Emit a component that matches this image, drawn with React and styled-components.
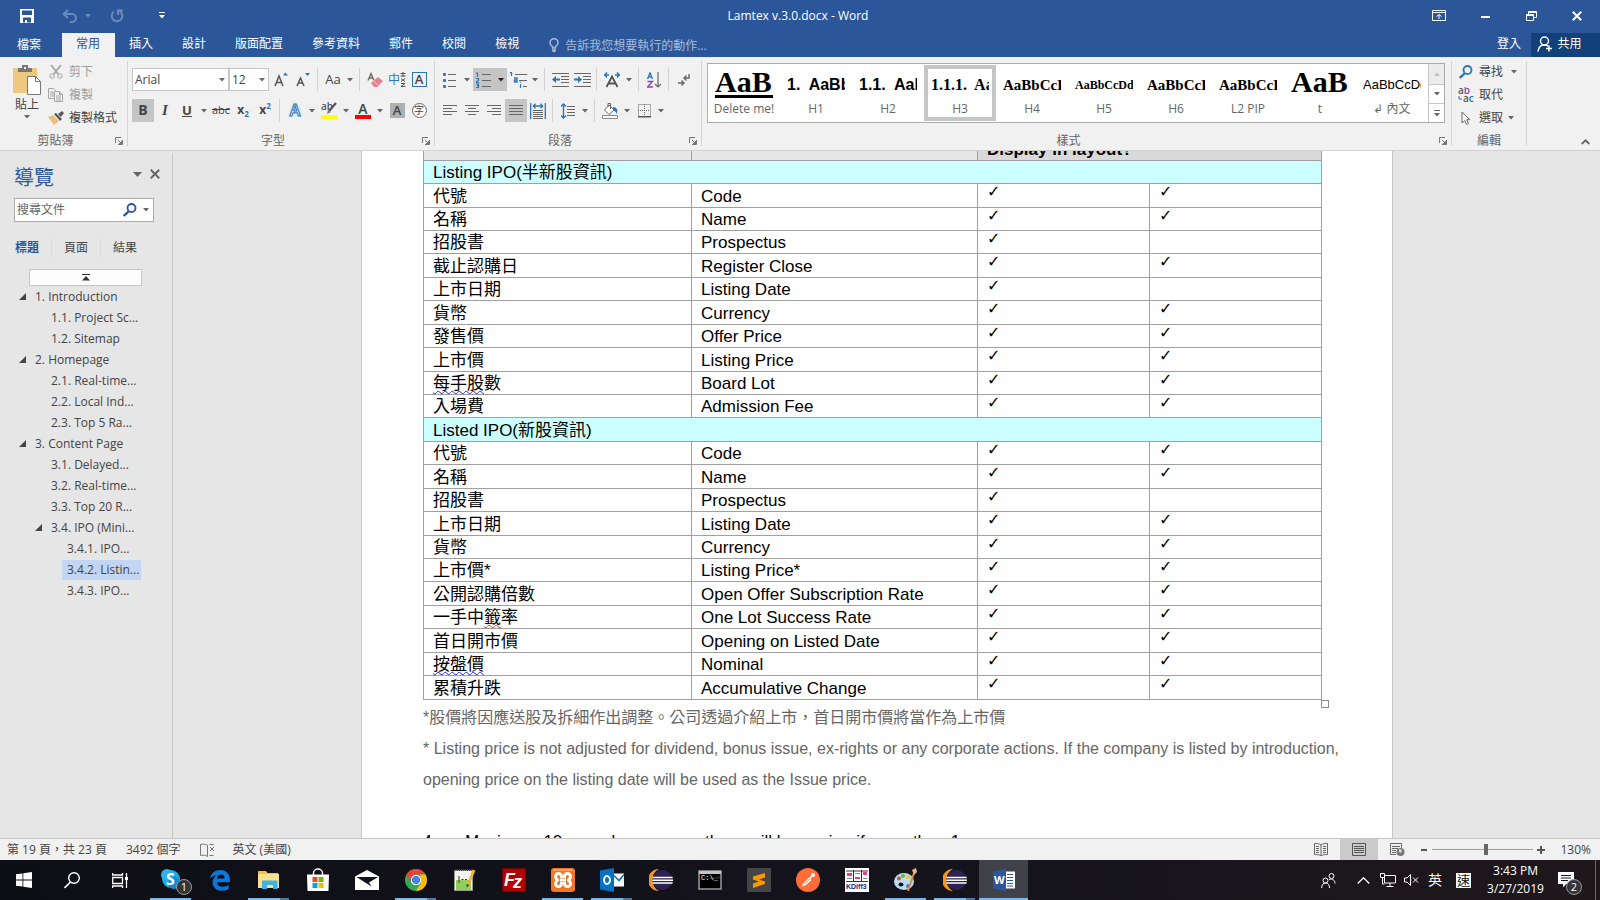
import React from "react";
import styled, { createGlobalStyle, css } from "styled-components";

const UI = `"Open Sans", "Noto Sans CJK TC", sans-serif`;
const DOC = `"Liberation Sans", "Noto Sans CJK TC", sans-serif`;
const SERIF = `"Liberation Serif", serif`;

const blue = "#2b579a";
const iconBlue = "#2e75b6";
const ink = "#444444";
const mute = "#666666";
const line = "#c6c6c6";

const GlobalStyle = createGlobalStyle`
  * { box-sizing: border-box; }
  body { margin: 0; font-family: ${UI}; font-size: 12px; line-height: 16px; color: ${ink}; background: #e6e6e6; overflow: hidden; }
  button, input { font: inherit; color: inherit; margin: 0; padding: 0; border: 0; background: none; border-radius: 0; outline: none; }
  button { display: flex; align-items: center; justify-content: center; white-space: nowrap; cursor: default; }
  a { color: inherit; text-decoration: none; cursor: default; }
  svg { display: block; flex: none; }
  ul { list-style: none; margin: 0; padding: 0; }
`;

const Window = styled.div`
  display: flex;
  flex-direction: column;
  height: 100vh;
`;

/* ---------- title bar ---------- */
const TitleBar = styled.header`
  display: grid;
  grid-template-columns: 1fr auto 1fr;
  align-items: center;
  height: 33px;
  padding-bottom: 2px;
  background: ${blue};
  color: #fff;
`;
const QuickAccess = styled.div`
  display: flex;
  align-items: center;
  gap: 14px;
  padding-left: 18px;
`;
const QuickButton = styled.button`
  height: 24px;
  gap: 8px;
  min-width: 18px;
  opacity: ${(p) => (p.$dim ? 0.3 : 1)};
  margin-right: ${(p) => p.$after || 0}px;
`;
const DocTitle = styled.h1`
  margin: 0;
  padding-right: 4px;
  font-size: 12px;
  font-weight: 400;
  line-height: 16px;
`;
const WindowControls = styled.div`
  display: flex;
  justify-content: flex-end;
`;
const ControlButton = styled.button`
  width: 46px;
  height: 30px;
`;

/* ---------- tabs ---------- */
const TabBar = styled.nav`
  display: flex;
  height: 24px;
  background: ${blue};
  color: #fff;
`;
const Tab = styled.button`
  height: 24px;
  padding: 0 15px 2px 14px;
  color: #fff;
  ${(p) => p.$file && css`padding: 0 21px 0 17px;`}
  ${(p) => p.$signIn && css`padding-right: 10px;`}
  ${(p) => p.$active && css`background: #f1f1f1; color: ${blue};`}
`;
const TellMe = styled.label`
  display: flex;
  align-items: center;
  gap: 6px;
  flex: 1;
  padding-left: 15px;
  color: #a9bcd8;
  input { width: 180px; height: 20px; }
  input::placeholder { color: #a9bcd8; opacity: 1; }
`;
const ShareButton = styled.button`
  width: 69px;
  height: 24px;
  gap: 4px;
  padding: 0 12px 2px 0;
  background: #124078;
  color: #fff;
`;

/* ---------- ribbon ---------- */
const Ribbon = styled.section`
  display: flex;
  height: 94px;
  background: #f1f1f1;
  border-bottom: 1px solid #d2d2d2;
`;
const RibbonDivider = styled.div`
  width: 1px;
  margin: 4px 0;
  background: #d5d5d5;
`;
const Group = styled.div`
  display: grid;
  grid-template-rows: 75px 18px;
  width: ${(p) => p.$width}px;
`;
const GroupFooter = styled.div`
  display: flex;
  align-items: center;
  text-align: center;
  color: ${mute};
  span { flex: 1; }
`;
const Launcher = styled.button`
  width: 16px;
  height: 16px;
`;
const ToolRows = styled.div`
  display: flex;
  flex-direction: column;
  gap: 8px;
  padding: 11px 0 0 4px;
`;
const ToolRow = styled.div`
  display: flex;
  height: 23px;
`;
const ToolSep = styled.div`
  width: 1px;
  margin: 0 4px 0 3px;
  background: #d2d2d2;
`;
const ToolButton = styled.button`
  height: 23px;
  background: ${(p) => (p.$on ? "#c5c5c5" : "transparent")};
`;
const ToolFace = styled.span`
  display: flex;
  align-items: center;
  justify-content: center;
  width: 22px;
`;
const CaretFace = styled.span`
  display: flex;
  align-items: center;
  justify-content: center;
  width: 12px;
`;
const ComboBox = styled.label`
  display: flex;
  align-items: center;
  width: ${(p) => p.$width}px;
  height: 23px;
  margin-right: ${(p) => p.$after || 0}px;
  padding: 0 3px 0 2px;
  background: #fff;
  border: 1px solid ${line};
  input { flex: 1; min-width: 0; width: 0; }
`;
const Glyph = styled.span`
  font-size: ${(p) => p.$size || 14}px;
  line-height: 18px;
  padding-bottom: 2px;
  font-weight: ${(p) => (p.$bold ? 700 : 400)};
  font-style: ${(p) => (p.$italic ? "italic" : "normal")};
  text-decoration: ${(p) => p.$deco || "none"};
  font-family: ${(p) => (p.$serif ? SERIF : UI)};
  sup, sub { font-size: 8px; line-height: 1px; color: ${iconBlue}; }
`;
const BoxedGlyph = styled.span`
  display: flex;
  align-items: center;
  justify-content: center;
  width: 15px;
  height: 15px;
  font-size: ${(p) => (p.$round ? 10 : 13)}px;
  line-height: 15px;
  font-weight: ${(p) => (p.$round ? 400 : 600)};
  border: 1px solid ${(p) => p.$line};
  border-radius: ${(p) => (p.$round ? 8 : 0)}px;
  background: ${(p) => p.$fill || "transparent"};
`;
const GlowGlyph = styled.span`
  font-size: 16px;
  line-height: 18px;
  padding-bottom: 2px;
  font-weight: 600;
  color: #fff;
  -webkit-text-stroke: 1px ${iconBlue};
  text-shadow: 0 0 3px #8db8e0;
`;
const BarGlyph = styled.span`
  display: block;
  width: 16px;
  text-align: center;
  font-size: ${(p) => p.$size}px;
  line-height: 13px;
  font-weight: 600;
  border-bottom: 4px solid ${(p) => p.$bar};
`;

const ClipboardBody = styled.div`
  display: flex;
  padding: 3px 0 0 8px;
`;
const PasteButton = styled.button`
  flex-direction: column;
  justify-content: flex-start;
  width: 38px;
  margin-right: 2px;
  padding-top: 5px;
  gap: 2px;
`;
const SmallColumn = styled.div`
  display: flex;
  flex-direction: column;
`;
const SmallButton = styled.button`
  justify-content: flex-start;
  height: 23px;
  gap: 5px;
  color: ${(p) => (p.$dim ? "#a0a0a0" : ink)};
`;
const IconSlot = styled.span`
  display: flex;
  justify-content: center;
  width: 16px;
`;
const EditingBody = styled.div`
  padding: 3px 0 0 6px;
`;

const StylesBody = styled.div`
  padding: 6px 6px 0 5px;
`;
const Gallery = styled.div`
  display: flex;
  height: 60px;
  background: #fff;
  border: 1px solid #ababab;
`;
const StyleTile = styled.button`
  flex-direction: column;
  justify-content: flex-start;
  width: 72px;
  margin: 1px 0;
  padding: 0 3px;
  border: 4px solid ${(p) => (p.$on ? line : "transparent")};
  color: ${mute};
`;
const StylePreview = styled.span`
  display: flex;
  align-items: center;
  width: 58px;
  height: ${(p) => (p.$big ? 29 : 32)}px;
  margin-bottom: ${(p) => (p.$big ? 3 : 0)}px;
  overflow: hidden;
  white-space: pre;
  color: #000;
  font-family: ${(p) => (p.$sans ? DOC : SERIF)};
  font-weight: ${(p) => (p.$plain ? 400 : 700)};
  font-size: ${(p) => p.$size}px;
  line-height: 26px;
  ${(p) => p.$big && css`border-bottom: 3px solid ${p.$under ? "#000" : "transparent"};`}
`;
const GalleryScroll = styled.div`
  display: grid;
  grid-template-rows: 20px 19px 19px;
  flex: 1;
  border-left: 1px solid ${line};
  button:first-child { background: #ececec; }
  button + button { border-top: 1px solid ${line}; }
`;
const CollapseArea = styled.div`
  flex: 1;
  display: flex;
  justify-content: flex-end;
  align-items: flex-end;
  padding: 0 7px 0 0;
`;

/* ---------- navigation pane ---------- */
const Body = styled.div`
  display: flex;
  flex: 1;
  min-height: 0;
  background: #e6e6e6;
`;
const NavPane = styled.aside`
  width: 173px;
  margin-top: 2px;
  padding: 12px 0 0 14px;
  border-right: 1px solid ${line};
`;
const NavHeader = styled.div`
  display: flex;
  align-items: flex-start;
  height: 26px;
  padding-right: 8px;
  h2 { flex: 1; margin: 0; font-size: 20px; line-height: 26px; font-weight: 400; color: ${blue}; }
  button { width: 18px; height: 18px; }
`;
const SearchBox = styled.label`
  display: flex;
  align-items: center;
  gap: 6px;
  width: 140px;
  height: 24px;
  margin-top: 7px;
  padding: 0 4px 0 2px;
  background: #fff;
  border: 1px solid #ababab;
  input { flex: 1; min-width: 0; width: 0; }
  input::placeholder { color: ${mute}; opacity: 1; }
`;
const NavTabs = styled.div`
  display: flex;
  height: 20px;
  margin-top: 16px;
`;
const NavTab = styled.button`
  width: ${(p) => (p.$first ? 37 : 49)}px;
  padding-right: ${(p) => (p.$first ? 11 : 0)}px;
  color: ${(p) => (p.$first ? blue : ink)};
  font-weight: ${(p) => (p.$first ? 700 : 400)};
  & + & { border-left: 1px solid #dcdcdc; }
`;
const JumpTop = styled.button`
  width: 113px;
  height: 17px;
  margin: 11px 0 0 15px;
  background: #fdfdfd;
  border: 1px solid ${line};
`;
const NavItem = styled.li`
  display: flex;
  align-items: center;
  height: 21px;
  margin-right: 31px;
  padding-left: ${(p) => (p.$level - 1) * 16}px;
  white-space: nowrap;
  a {
    flex: 1;
    height: 20px;
    line-height: 19px;
    padding-left: 5px;
    background: ${(p) => (p.$on ? "#c2d5f2" : "transparent")};
  }
`;
const Twisty = styled.span`
  display: flex;
  width: 16px;
  padding-left: 5px;
`;

/* ---------- document ---------- */
const Workspace = styled.main`
  flex: 1;
  min-width: 0;
  overflow: hidden;
  padding-right: 19px;
`;
const Page = styled.article`
  width: 1032px;
  min-height: 100%;
  margin: -15px auto 0;
  padding: 0 71px 0 61px;
  background: #fff;
  border: solid ${line};
  border-width: 0 1px;
  font-family: ${DOC};
  font-size: 17px;
  line-height: 22px;
  color: #000;
`;
const TableFrame = styled.div`
  position: relative;
`;
const ResizeHandle = styled.span`
  position: absolute;
  left: 100%;
  top: 100%;
  width: 8px;
  height: 8px;
  border: 1px solid #8c8c8c;
  background: #fff;
`;
const DataTable = styled.table`
  width: 100%;
  table-layout: fixed;
  border-collapse: collapse;
  tbody tr { height: 23px; }
  tbody tr:nth-child(7n + 2), tbody tr:nth-child(7n + 5), tbody tr:nth-child(7n + 7) { height: 24px; }
  thead tr { height: 24px; }
`;
const Cell = styled.td`
  padding: 2px 9px 0;
  border: 1px solid #a0a0a0;
  text-align: left;
  font-weight: 400;
  line-height: 20px;
  white-space: nowrap;
`;
const HeadCell = styled(Cell)`
  padding-top: 3px;
  background: ${(p) => (p.$dark ? "#d9d9d9" : "#e6e6e6")};
  font-weight: 700;
`;
const SectionCell = styled(Cell)`
  background: #ccffff;
`;
const CheckCell = styled(Cell)`
  padding-top: 0;
  vertical-align: top;
  font-family: "DejaVu Sans", sans-serif;
  font-size: 16px;
  line-height: 15px;
`;
const Wavy = styled.span`
  text-decoration: underline wavy ${(p) => p.$color} 1px;
  text-underline-offset: 1px;
  text-decoration-skip-ink: none;
`;
const Notes = styled.div`
  padding-top: 2px;
  font-size: 16px;
  line-height: 31px;
  color: #666;
  white-space: nowrap;
  p { margin: 0; }
`;
const NextItem = styled.ol`
  margin: 31px 0 0;
  padding-left: 42px;
  line-height: 31px;
  white-space: nowrap;
  li::marker { content: "4.      "; }
`;

/* ---------- status bar ---------- */
const StatusBar = styled.footer`
  display: flex;
  align-items: center;
  height: 22px;
  border-top: 1px solid ${line};
  background: #f1f1f1;
  padding: 0 9px 0 7px;
  gap: 19px;
`;
const StatusText = styled.span`
  line-height: 20px;
`;
const StatusSpacer = styled.span`
  flex: 1;
`;
const ViewButtons = styled.div`
  display: flex;
`;
const ViewButton = styled.button`
  width: 38px;
  height: 21px;
  background: ${(p) => (p.$on ? "#cacaca" : "transparent")};
`;
const ZoomControls = styled.div`
  display: flex;
  align-items: center;
  gap: 4px;
  margin-left: -15px;
`;
const ZoomSlider = styled.input`
  appearance: none;
  width: 101px;
  height: 12px;
  background: linear-gradient(#a0a0a0, #a0a0a0) center / 100% 1px no-repeat;
  &::-webkit-slider-thumb { appearance: none; width: 4px; height: 11px; background: #666; border: 0; }
`;
const ZoomValue = styled.span`
  width: 32px;
  margin-left: -5px;
  text-align: right;
`;

/* ---------- taskbar ---------- */
const Taskbar = styled.div`
  display: flex;
  height: 40px;
  background: linear-gradient(90deg, #0e0e16, #15141d 60%, #1f181b);
  color: #fff;
`;
const TaskSystem = styled.div`
  display: flex;
  width: 146px;
`;
const SystemButton = styled.button`
  width: 48px;
`;
const TaskApp = styled.button`
  position: relative;
  width: 49px;
  background: ${(p) => (p.$active ? "#414149" : "transparent")};
  &::after {
    content: "";
    position: absolute;
    bottom: 0;
    left: ${(p) => (p.$active ? 0 : 4)}px;
    right: ${(p) => (p.$active ? 0 : 4)}px;
    height: 2px;
    background: ${(p) =>
      p.$run === 2
        ? "linear-gradient(90deg, #76b9ed 32px, #4d7ba0 32px)"
        : p.$run === 1
        ? "#76b9ed"
        : "transparent"};
  }
`;
const Badge = styled.span`
  position: absolute;
  left: ${(p) => p.$left}px;
  bottom: 5px;
  width: 16px;
  height: 16px;
  border-radius: 8px;
  border: 1px solid #9a9a9a;
  background: #33343a;
  font-size: 11px;
  line-height: 14px;
  text-align: center;
`;
const Tray = styled.div`
  display: flex;
  align-items: center;
  margin-left: auto;
`;
const TrayButton = styled.button`
  position: relative;
  width: ${(p) => p.$width}px;
  height: 40px;
  padding-right: ${(p) => p.$end || 0}px;
  font-size: 14px;
`;
const ImeBox = styled.span`
  width: 15px;
  height: 15px;
  background: #fff;
  color: #111;
  font-size: 13px;
  line-height: 15px;
`;
const Clock = styled.button`
  flex-direction: column;
  width: 71px;
  height: 40px;
  line-height: 18px;
`;
const ShowDesktop = styled.button`
  width: 5px;
  height: 40px;
  border-left: 1px solid #6b6769;
`;

/* ---------- drawings ---------- */
const Svg = ({ w = 16, h = 16, children, ...rest }) => (
  <svg width={w} height={h} viewBox={`0 0 ${w} ${h}`} fill="none" aria-hidden="true" {...rest}>
    {children}
  </svg>
);
const Caret = ({ color = "#666" }) => (
  <Svg w={6} h={4}><path d="M0 0h6L3 3.5z" fill={color} /></Svg>
);
const P = ({ d, c = "#666", s = 1, f = "none" }) => <path d={d} stroke={c} strokeWidth={s} fill={f} />;

const SaveIcon = () => (
  <Svg w={14} h={14}><path fillRule="evenodd" fill="#fff" d="M0 0h14v14H0zM2 1.500h10V6H2zM3 8.500v5h2v-2.500h2v2.500h4v-5z" /></Svg>
);
const UndoIcon = () => (
  <Svg w={15} h={14}><P c="#fff" s={2} d="M6 1L1.500 5 6 9M2 5h8a3.500 3.500 0 0 1 0 8H8" /></Svg>
);
const RedoIcon = () => (
  <Svg w={14} h={14}><P c="#fff" s={2} d="M4 2.500A5.300 5.300 0 1 0 9.500 2.200M8 6V1.500h5" /></Svg>
);
const CustomizeIcon = () => (
  <Svg w={6} h={7}><path fill="#fff" d="M0 0h6v1H0zM0 3h6L3 6.500z" /></Svg>
);
const BulbIcon = () => (
  <Svg w={10} h={14}><P c="#a9bcd8" s={1.5} d="M3.500 10V8.500C2 7.500 1 6.500 1 4.700a4 4 0 0 1 8 0C9 6.500 8 7.500 6.500 8.500V10zM3 12h4M3.500 13.500h3" /></Svg>
);
const ShareIcon = () => (
  <Svg w={16} h={16}><P c="#fff" s={1.5} d="M1 15.500C1.500 11.500 4 9 7 9s3.500 .5 4.500 1.500" /><circle cx="7.500" cy="5" r="4" stroke="#fff" strokeWidth="1.500" /><P c="#fff" s={1.5} d="M12 9.500v6M9 12.500h6" /></Svg>
);
const LauncherIcon = () => (
  <Svg w={8} h={8}><P c="#777" d="M.5 6V.5H6M3 3l3 3M7.500 3v4.500H3" /><path fill="#777" d="M7 3.500V7H3.500z" /></Svg>
);
const PasteIcon = () => (
  <Svg w={28} h={30}>
    <path fill="#edc87e" d="M0 3h24v25H0z" />
    <path fill="#777" d="M5 3h4V0h6v3h4v4H5z" /><path fill="#f1f1f1" d="M11 2h2v2h-2z" />
    <path fill="#fff" stroke="#777" d="M14.500 11.500h8l5 5v13h-13z" /><P c="#777" d="M22.500 11.500v5h5" />
  </Svg>
);
const CutIcon = () => (
  <Svg w={14} h={14}><P c="#a6a6a6" s={1.8} d="M2 0l7.500 9.500M12 0L4.500 9.500" /><circle cx="3" cy="11" r="2.200" stroke="#a6a6a6" /><circle cx="11" cy="11" r="2.200" stroke="#a6a6a6" /></Svg>
);
const CopyIcon = () => (
  <Svg w={16} h={14}><P c="#a6a6a6" f="#f1f1f1" d="M.5 .5h5l2 2v8h-7z" /><P c="#a6a6a6" d="M2 4h4M2 6h4M2 8h4" /><P c="#a6a6a6" f="#f1f1f1" d="M6.500 3.500h5l3 3v7h-8zM11.500 3.500v3h3M8 8h5M8 10h5M8 12h5" /></Svg>
);
const BrushIcon = () => (
  <Svg w={16} h={14}><path fill="#edc07a" d="M0 6l5-2 6 6-5 4z" /><path fill="#595959" d="M6 3l2-1 6 6-2 2zM10 3l4-3 2 2-3 4z" /></Svg>
);
const EraserIcon = () => (
  <Svg w={16} h={16}><P c="#666" s={1.3} d="M1 8.500L4 1.500 7 8.500M2 6h4" /><path fill="#e8818f" d="M4 11l7-6 5 4-6 6H7z" /><P c="#f7d5d9" d="M6.500 9l4.500 4" /></Svg>
);
const lines = (x, w, ys, c = "#666") => ys.map((y) => <path key={`${x}-${y}`} fill={c} d={`M${x} ${y}h${w}v1h-${w}z`} />);
const BulletsIcon = () => (
  <Svg w={14} h={16}>{[1, 7, 13].map((y) => <rect key={y} x="0" y={y} width="3" height="3" rx="1" fill={iconBlue} />)}{lines(5, 8, [2, 8, 14])}</Svg>
);
const NumbersIcon = () => (
  <Svg w={16} h={16}><P c={iconBlue} s={1.2} d="M0 1h1.500v4M0 6.500h2.500v1.500L0 10.500h3M0 12h2.500v3.500H0M1 13.700h1.500" />{lines(6, 9, [2, 8, 14])}</Svg>
);
const MultiIcon = () => (
  <Svg w={17} h={16}><P c={iconBlue} s={1.3} d="M0 .7h1.500V4M4 6h3v4H4.500V8H7M10.500 12v4M10.500 10.500v-1" />{lines(5, 12, [2])}{lines(9, 8, [8])}{lines(13, 4, [14])}</Svg>
);
const IndentIcon = ({ flip }) => (
  <Svg w={17} h={14}>{lines(0, 17, [0, 13])}{lines(9, 8, [3, 6, 9])}<path fill={iconBlue} transform={flip ? "matrix(-1 0 0 1 8 0)" : undefined} d="M0 6.500L4 3v2.500h4v2H4V10z" /></Svg>
);
const AsianIcon = () => (
  <Svg w={16} h={16}><P c="#555" s={1.8} d="M2.500 15L8 4.500l5.500 10.500M4.500 11.500h7" /><P c={iconBlue} s={1.4} d="M0 3h5M11 3h5M3 .5L.8 3 3 5.500M13 .5L15.200 3 13 5.500" /></Svg>
);
const SortIcon = () => (
  <Svg w={14} h={16}><P c={iconBlue} s={1.3} d="M.5 7L3 .7 5.500 7M1.500 5h3" /><P c="#8e44ad" s={1.3} d="M.5 9.500h5l-5 5.500h5.500" /><P c="#666" s={1.2} d="M11 0v15M8 12l3 3 3-3" /></Svg>
);
const MarksIcon = () => (
  <Svg w={12} h={14}><P c="#666" s={1.4} d="M11 1v4H6M8.500 2.500L6 5l2.500 2.500M0 10h6M3.500 7.500L6 10l-2.500 2.500" /></Svg>
);
const AlignIcon = ({ kind }) => (
  <Svg w={14} h={11}>
    {kind === "j" && lines(0, 14, [0, 3, 6, 9])}
    {kind === "l" && <>{lines(0, 14, [0, 6])}{lines(0, 9, [3, 9])}</>}
    {kind === "c" && <>{lines(0, 14, [0, 6])}{lines(3, 8, [3, 9])}</>}
    {kind === "r" && <>{lines(0, 14, [0, 6])}{lines(5, 9, [3, 9])}</>}
  </Svg>
);
const DistributeIcon = () => (
  <Svg w={16} h={16}><P c={iconBlue} s={1.3} d="M.7 0v16M15.300 0v16M3 3h10M5.500 .8L3.300 3l2.200 2.200M10.500 .8L12.700 3l-2.200 2.200" />{lines(3, 10, [7, 9, 11, 13, 15])}</Svg>
);
const SpacingIcon = () => (
  <Svg w={14} h={16}><P c={iconBlue} s={1.4} d="M2.500 1v14M0 3.500L2.500 1 5 3.500M0 12.500L2.500 15 5 12.500" />{lines(6, 8, [3, 6, 9, 12])}</Svg>
);
const BucketIcon = () => (
  <Svg w={16} h={16}><P c="#666" f="#fff" d="M2.500 7L7 2l5 5-5 4.500zM6 4V.5h2.500V6" /><path fill={iconBlue} d="M11 4c4 0 5 3 4 7-1-2-2-3-4-4z" /><P c="#888" f="#fff" d="M.5 12.500h15v3H.5z" /></Svg>
);
const BorderIcon = () => (
  <Svg w={13} h={14}><path d="M.5 .5h12v12H.5zM6.500 0v12M0 6.500h12" stroke="#666" strokeDasharray="1 1" /><path fill="#555" d="M0 12h13v1.500H0z" /></Svg>
);
const FindIcon = ({ c = iconBlue }) => (
  <Svg w={14} h={14}><circle cx="8.500" cy="5" r="4" stroke={c} strokeWidth="1.800" /><P c={c} s={2.4} d="M5.500 8.500L.8 13" /></Svg>
);
const ReplaceIcon = () => (
  <Svg w={16} h={16}>
    <text x="0" y="7" fontSize="10" fontWeight="600" fontFamily="Open Sans" fill="#555">a<tspan fill="#8e44ad">b</tspan></text>
    <text x="5" y="15" fontSize="10" fontWeight="600" fontFamily="Open Sans" fill="#555">a<tspan fill={iconBlue}>c</tspan></text>
    <P c={iconBlue} d="M1 9v3h3" />
  </Svg>
);
const SelectIcon = () => (
  <Svg w={10} h={14}><P c="#666" f="#fff" d="M1 1v11l2.700-2.500L5.500 13.500l2-1L5.700 8.700H9z" /></Svg>
);
const HighlightIcon = () => (
  <Svg w={17} h={17}><text x="0" y="8" fontSize="10" fontWeight="600" fontFamily="Open Sans" fill="#555">ab</text><P c="#555" s={2.2} d="M15 1L8 9" /><path fill="#777" d="M7 8l3 2-4 2z" /><path fill="#ff0" d="M0 13h16v4H0z" /></Svg>
);
const PhoneticIcon = () => (
  <Svg w={17} h={16}><text x="-1" y="12" fontSize="12" fontFamily="Noto Sans CJK TC" fill={iconBlue}>中</text><P c="#555" d="M11.500 1.500h5M11.500 4h5M14 0v5M12 6.500l4 3M16 6.500l-4 3M12 11.500h4l-4 3h4.500" /></Svg>
);

/* taskbar drawings */
const WindowsLogo = () => <Svg w={16} h={16}><path fill="#fff" d="M0 2.300l6.500-.9v6.100H0zM7.300 1.300L16 0v7.500H7.300zM0 8.400h6.500v6.200L0 13.700zM7.300 8.400H16V16l-8.700-1.200z" /></Svg>;
const TaskSearch = () => <Svg w={16} h={17}><circle cx="10" cy="6" r="5.300" stroke="#fff" strokeWidth="1.400" /><P c="#fff" s={1.6} d="M6.500 10L.5 16" /></Svg>;
const TaskView = () => <Svg w={17} h={15}><P c="#fff" s={1.3} d="M.5 0v2h10V0M.5 15v-2h10v2M.7 4.500h9.800v6H.7zM14.500 0v15" /><path fill="#fff" d="M13 4h3v3h-3z" /></Svg>;
const Skype = () => <Svg w={24} h={24}><circle cx="12" cy="11" r="9" fill="#1da8e8" /><circle cx="8" cy="7" r="6" fill="#28b2ee" /><circle cx="15" cy="15" r="6" fill="#0d8ed4" /><text x="7" y="17" fontSize="16" fontWeight="700" fontFamily="Open Sans" fill="#fff">S</text></Svg>;
const Edge = () => <Svg w={22} h={22}><path fill="#0b78d8" d="M1 10C2 4 6 1 11.500 1 17.500 1 21 5.500 21 11v2.200H8c.2 3 2.500 4.600 5.600 4.600 2.400 0 4.500-.7 6-1.700v4c-1.700 1-4 1.700-6.800 1.700C7 21.800 3.600 18 3.600 13.500c0-3.200 1.700-5.800 4.300-7.200C4.600 6.700 2.200 8 1 10zM8.200 9.500h7.300c0-2.400-1.200-3.900-3.500-3.900-2.200 0-3.500 1.600-3.800 3.900z" /></Svg>;
const Explorer = () => <Svg w={24} h={20}><path fill="#f0c04e" d="M1 1h8l1.500 2H21v3H1z" /><path fill="#fbe08c" d="M1 4h21v14H1z" /><path fill="#3cb2e8" d="M5 10.500h15.500V19H16v-4h-6v4H5z" /></Svg>;
const Store = () => <Svg w={24} h={24}><P c="#fff" s={1.4} d="M7.500 7V5a4.500 4 0 0 1 9 0v2" /><path fill="#fff" d="M1 6.500h22L22.500 23h-21z" /><path fill="#e84a1f" d="M6.500 9h5v5h-5z" /><path fill="#7ab800" d="M12.500 9h5v5h-5z" /><path fill="#00a4ef" d="M6.500 15h5v5h-5z" /><path fill="#fdb900" d="M12.500 15h5v5h-5z" /></Svg>;
const Mail = () => <Svg w={24} h={20}><path fill="#fff" d="M12 0l12 6.500V20H0V6.500z" /><path fill="#12121a" d="M1.500 7h21.500l-9 5.500 2.500 4z" /></Svg>;
const Chrome = () => <Svg w={24} h={24}><circle cx="12" cy="12" r="11" fill="#34a853" /><path fill="#ea4335" d="M2.500 6.500A11 11 0 0 1 21.500 6.500H12L7.500 14.500z" /><path fill="#fbbc05" d="M21.500 6.500A11 11 0 0 1 12 23l5-8.500L16 6.500z" /><circle cx="12" cy="12" r="5.200" fill="#fff" /><circle cx="12" cy="12" r="4.200" fill="#4285f4" /></Svg>;
const Notepad = () => <Svg w={24} h={24}><path fill="#f5f5ee" stroke="#999" d="M1.500 2.500h18v20h-18z" /><path fill="#8fd05a" d="M3 12h15v10H3z" /><path d="M2 2h17" stroke="#444" strokeWidth="2" strokeDasharray="1 1" /><P c="#333" d="M6 8v7M8.500 11.500h2M12 11.500h2" /><P c="#e8b23c" s={3} d="M21 2l-6 15" /><path fill="#333" d="M13.500 16l2.600 1-2.300 2.500z" /></Svg>;
const FileZilla = () => <Svg w={24} h={24}><path fill="#b30000" stroke="#6e0000" strokeDasharray="2 1" d="M.5 .5h23v23H.5z" /><text x="2" y="18" fontSize="18" fontWeight="700" fontStyle="italic" fontFamily="Liberation Sans" fill="#fff">F<tspan x="11" y="20">z</tspan></text></Svg>;
const Xampp = () => (
  <Svg w={24} h={24}>
    <rect width="24" height="24" rx="3" fill="#f37623" /><path fill="#f9a065" d="M2 1h20v2H2z" />
    <P c="#fff" s={3} d="M10.500 10V8.500a3 3 0 0 0-6 0c0 1.800 1 2.500 2 3.500-1 1-2 1.700-2 3.500a3 3 0 0 0 6 0V14M13.500 10V8.500a3 3 0 0 1 6 0c0 1.800-1 2.500-2 3.500 1 1 2 1.700 2 3.500a3 3 0 0 1-6 0V14M9 12h6" />
  </Svg>
);
const Outlook = () => <Svg w={24} h={24}><path fill="#fff" d="M13 5.500h11v13H13z" /><P c="#0072c6" s={1.6} d="M14 7.500l5 5 5-6" /><path fill="#0072c6" d="M0 2.500L14 0v24L0 21.500z" /><ellipse cx="7" cy="12" rx="3" ry="3.900" stroke="#fff" strokeWidth="2" /></Svg>;
const Eclipse = () => <Svg w={24} h={24}><path fill="#f7941e" d="M10 1a11 11 0 0 0 0 22A12.500 12.500 0 0 1 10 1z" /><circle cx="13.500" cy="12" r="10" fill="#2c2255" /><path fill="#fff" d="M3.500 8.800h20l.3 1.500H3.300zM3.300 11.500h21v1.600H3.200zM3.400 14.300h20.400l-.4 1.500H3.700z" /></Svg>;
const Cmd = () => <Svg w={24} h={20}><path fill="#000" stroke="#9b9b9b" strokeWidth="1.500" d="M1 1h22v18H1z" /><path fill="#c5c5c5" d="M1 1h22v3H1z" /><path fill="#333" opacity=".7" d="M2 10c8-3 14-2 20-4v3H2z" /><text x="3" y="10" fontSize="7" fontFamily="Liberation Mono" fill="#fff">C:\_</text></Svg>;
const Sublime = () => <Svg w={24} h={24}><rect width="24" height="24" rx="1" fill="#454545" /><path fill="#ff9800" d="M6 8.500L18 5v4.500l-6 2 6 2V16L6 20v-4.500l6-2-6-2z" /></Svg>;
const Postman = () => <Svg w={24} h={24}><circle cx="12" cy="12" r="12" fill="#ff6c37" /><path fill="#fff" d="M5.500 18.500l1.500-3 6-6 2.500 2.500-6 5.500z" /><circle cx="17" cy="7" r="2" fill="#fff" /><P c="#fff" s={1.4} d="M13 11l4-4" /><P c="#ff6c37" d="M8 16.500l5.500-5.500" /></Svg>;
const KDiff = () => <Svg w={24} h={24}><path fill="#fff" d="M0 0h24v24H0z" /><path stroke="#333" d="M1 3h7M9 3h7M17 3h6M8.500 2v11M16.500 2v11M1 13.500h22" /><path fill="#e83e8c" d="M2 5h5v3H2zM10 9h5v2h-5zM18 4h4v3h-4z" /><path fill="#888" d="M2 10h5v1H2zM10 5h5v1h-5zM18 10h4v1h-4z" /><text x="1" y="21" fontSize="7" fontWeight="700" fontFamily="Liberation Sans" fill="#1c1c7a">KDiff3</text></Svg>;
const Paint = () => <Svg w={24} h={24}><ellipse cx="10" cy="13.500" rx="10" ry="8.500" fill="#bcdcf2" /><ellipse cx="7" cy="16.500" rx="2.500" ry="2" fill="#15141d" /><circle cx="5" cy="10.500" r="2" fill="#d94b3b" /><circle cx="9" cy="8" r="2" fill="#6cb33f" /><circle cx="14" cy="9" r="2" fill="#f4c430" /><circle cx="14" cy="18" r="2" fill="#4678c8" /><P c="#d98b3c" s={2} d="M20 5l-6 18" /><path fill="#e5b985" d="M18 2l4-2 1 4-3 3z" /></Svg>;
const WordLogo = () => <Svg w={22} h={22}><path fill="#fff" d="M12 2.500h10v17H12z" /><path stroke="#2b579a" d="M14 5.500h6M14 8.500h6M14 11.500h6M14 14.500h6M14 17h6" /><path fill="#2b579a" d="M0 2.300L13 0v22L0 19.700z" /><text x="1" y="15" fontSize="11" fontWeight="700" fontFamily="Open Sans" fill="#fff">W</text></Svg>;

/* ---------- data ---------- */
const TABS = ["常用", "插入", "設計", "版面配置", "參考資料", "郵件", "校閱", "檢視"];
const STYLES = [
  { name: "Delete me!", text: "AaB", size: 30, under: true, big: true },
  { name: "H1", text: "1.  AaBb", size: 16, sans: true },
  { name: "H2", text: "1.1.  AaB", size: 16, sans: true },
  { name: "H3", text: "1.1.1.  Aa", size: 16, on: true },
  { name: "H4", text: "AaBbCcD", size: 15 },
  { name: "H5", text: "AaBbCcDd", size: 12 },
  { name: "H6", text: "AaBbCcD", size: 15 },
  { name: "L2 PIP", text: "AaBbCcD", size: 15 },
  { name: "t", text: "AaB", size: 30, big: true },
  { name: "↲ 內文", text: "AaBbCcDd", size: 13, sans: true, plain: true },
];
const OUTLINE = [
  [1, "1. Introduction", true], [2, "1.1. Project Sc..."], [2, "1.2. Sitemap"],
  [1, "2. Homepage", true], [2, "2.1. Real-time..."], [2, "2.2. Local Ind..."], [2, "2.3. Top 5 Ra..."],
  [1, "3. Content Page", true], [2, "3.1. Delayed..."], [2, "3.2. Real-time..."], [2, "3.3. Top 20 R..."],
  [2, "3.4. IPO (Mini...", true], [3, "3.4.1. IPO..."], [3, "3.4.2. Listin...", false, true], [3, "3.4.3. IPO..."],
];
const ROWS = [
  { section: "Listing IPO(半新股資訊)" },
  { zh: "代號", en: "Code", a: 1, b: 1 },
  { zh: "名稱", en: "Name", a: 1, b: 1 },
  { zh: "招股書", en: "Prospectus", a: 1 },
  { zh: "截止認購日", en: "Register Close", a: 1, b: 1 },
  { zh: "上市日期", en: "Listing Date", a: 1 },
  { zh: "貨幣", en: "Currency", a: 1, b: 1 },
  { zh: "發售價", en: "Offer Price", a: 1, b: 1 },
  { zh: "上市價", en: "Listing Price", a: 1, b: 1 },
  { zh: <><Wavy $color="#22f">每手股</Wavy>數</>, en: "Board Lot", a: 1, b: 1 },
  { zh: "入場費", en: "Admission Fee", a: 1, b: 1 },
  { section: "Listed IPO(新股資訊)" },
  { zh: "代號", en: "Code", a: 1, b: 1 },
  { zh: "名稱", en: "Name", a: 1, b: 1 },
  { zh: "招股書", en: "Prospectus", a: 1 },
  { zh: "上市日期", en: "Listing Date", a: 1, b: 1 },
  { zh: "貨幣", en: "Currency", a: 1, b: 1 },
  { zh: "上市價*", en: "Listing Price*", a: 1, b: 1 },
  { zh: "公開認購倍數", en: "Open Offer Subscription Rate", a: 1, b: 1 },
  { zh: <>一手中<Wavy $color="#f22">籤</Wavy>率</>, en: "One Lot Success Rate", a: 1, b: 1 },
  { zh: "首日開市價", en: "Opening on Listed Date", a: 1, b: 1 },
  { zh: <Wavy $color="#22f">按盤價</Wavy>, en: "Nominal", a: 1, b: 1 },
  { zh: "累積升跌", en: "Accumulative Change", a: 1, b: 1 },
];
const APPS = [
  ["Skype", Skype, 1, "1"], ["Edge", Edge], ["File Explorer", Explorer, 2], ["Store", Store], ["Mail", Mail],
  ["Chrome", Chrome, 2], ["Notepad++", Notepad], ["FileZilla", FileZilla], ["XAMPP", Xampp, 1], ["Outlook", Outlook, 2],
  ["Eclipse", Eclipse], ["Command Prompt", Cmd], ["Sublime Text", Sublime], ["Postman", Postman], ["KDiff3", KDiff],
  ["Paint", Paint, 1], ["Eclipse workspace", Eclipse, 2], ["Word", WordLogo, 1],
];

const Tool = ({ label, caret, on, children }) => (
  <ToolButton $on={on} aria-label={label}>
    <ToolFace>{children}</ToolFace>
    {caret && <CaretFace><Caret color={on ? "#222" : "#666"} /></CaretFace>}
  </ToolButton>
);
const RibbonGroup = ({ label, width, launcher = true, children }) => (
  <>
    <Group $width={width}>
      {children}
      <GroupFooter>
        <span>{label}</span>
        {launcher && <Launcher aria-label={`${label} 設定`}><LauncherIcon /></Launcher>}
      </GroupFooter>
    </Group>
    <RibbonDivider />
  </>
);

function RibbonBar() {
  return (
    <Ribbon>
      <RibbonGroup label="剪貼簿" width={127}>
        <ClipboardBody>
          <PasteButton><PasteIcon /><span>貼上</span><Caret /></PasteButton>
          <SmallColumn>
            <SmallButton $dim><IconSlot><CutIcon /></IconSlot>剪下</SmallButton>
            <SmallButton $dim><IconSlot><CopyIcon /></IconSlot>複製</SmallButton>
            <SmallButton><IconSlot><BrushIcon /></IconSlot>複製格式</SmallButton>
          </SmallColumn>
        </ClipboardBody>
      </RibbonGroup>

      <RibbonGroup label="字型" width={306}>
        <ToolRows>
          <ToolRow>
            <ComboBox $width={97}><input aria-label="字型" defaultValue="Arial" /><Caret /></ComboBox>
            <ComboBox $width={40} $after={1}><input aria-label="字型大小" defaultValue="12" /><Caret /></ComboBox>
            <Tool label="放大字型"><Svg w={14} h={16}><P c="#555" s={1.5} d="M1 14L5 4l4 10M2.500 10.500h5" /><path fill={iconBlue} d="M9 3.500h5L11.500 .5z" /></Svg></Tool>
            <Tool label="縮小字型"><Svg w={14} h={16}><P c="#555" s={1.5} d="M1 14L4.500 6 8 14M2.500 11h4" /><path fill={iconBlue} d="M9 1h5l-2.500 3z" /></Svg></Tool>
            <ToolSep />
            <Tool label="大小寫轉換" caret><Glyph $size={13}>Aa</Glyph></Tool>
            <ToolSep />
            <Tool label="清除格式"><EraserIcon /></Tool>
            <Tool label="注音標示"><PhoneticIcon /></Tool>
            <Tool label="字元框線"><BoxedGlyph $line={iconBlue}>A</BoxedGlyph></Tool>
          </ToolRow>
          <ToolRow>
            <Tool label="粗體" on><Glyph $bold>B</Glyph></Tool>
            <Tool label="斜體"><Glyph $italic $serif $bold $size={15}>I</Glyph></Tool>
            <Tool label="底線" caret><Glyph $bold $size={13} $deco="underline">U</Glyph></Tool>
            <Tool label="刪除線"><Glyph $size={11} $deco="line-through">abc</Glyph></Tool>
            <Tool label="下標"><Glyph $bold $size={12}>x<sub>2</sub></Glyph></Tool>
            <Tool label="上標"><Glyph $bold $size={12}>x<sup>2</sup></Glyph></Tool>
            <ToolSep />
            <Tool label="文字效果" caret><GlowGlyph>A</GlowGlyph></Tool>
            <Tool label="文字醒目提示" caret><HighlightIcon /></Tool>
            <Tool label="字型色彩" caret><BarGlyph $size={14} $bar="#f00">A</BarGlyph></Tool>
            <Tool label="字元網底"><BoxedGlyph $line="#b0b0b0" $fill="#b0b0b0">A</BoxedGlyph></Tool>
            <Tool label="圍繞字元"><BoxedGlyph $round $line="#666" $fill="#fff">字</BoxedGlyph></Tool>
          </ToolRow>
        </ToolRows>
      </RibbonGroup>

      <RibbonGroup label="段落" width={266}>
        <ToolRows>
          <ToolRow>
            <Tool label="項目符號" caret><BulletsIcon /></Tool>
            <Tool label="編號" caret on><NumbersIcon /></Tool>
            <Tool label="多層次清單" caret><MultiIcon /></Tool>
            <ToolSep />
            <Tool label="減少縮排"><IndentIcon /></Tool>
            <Tool label="增加縮排"><IndentIcon flip /></Tool>
            <ToolSep />
            <Tool label="亞洲方式配置" caret><AsianIcon /></Tool>
            <ToolSep />
            <Tool label="排序"><SortIcon /></Tool>
            <ToolSep />
            <Tool label="顯示編輯標記"><MarksIcon /></Tool>
          </ToolRow>
          <ToolRow>
            <Tool label="靠左對齊"><AlignIcon kind="l" /></Tool>
            <Tool label="置中"><AlignIcon kind="c" /></Tool>
            <Tool label="靠右對齊"><AlignIcon kind="r" /></Tool>
            <Tool label="左右對齊" on><AlignIcon kind="j" /></Tool>
            <Tool label="分散對齊"><DistributeIcon /></Tool>
            <ToolSep />
            <Tool label="行距" caret><SpacingIcon /></Tool>
            <ToolSep />
            <Tool label="網底" caret><BucketIcon /></Tool>
            <Tool label="框線" caret><BorderIcon /></Tool>
          </ToolRow>
        </ToolRows>
      </RibbonGroup>

      <RibbonGroup label="樣式" width={749}>
        <StylesBody>
          <Gallery>
            {STYLES.map((s) => (
              <StyleTile key={s.name} $on={s.on}>
                <StylePreview $size={s.size} $sans={s.sans} $plain={s.plain} $under={s.under} $big={s.big}>{s.text}</StylePreview>
                <span>{s.name}</span>
              </StyleTile>
            ))}
            <GalleryScroll>
              <button aria-label="上一列"><Svg w={6} h={4}><path d="M0 4h6L3 .5z" fill="#c0c0c0" /></Svg></button>
              <button aria-label="下一列"><Caret /></button>
              <button aria-label="其他"><Svg w={6} h={7}><path fill="#666" d="M0 0h6v1H0zM0 3h6L3 6.500z" /></Svg></button>
            </GalleryScroll>
          </Gallery>
        </StylesBody>
      </RibbonGroup>

      <RibbonGroup label="編輯" width={74} launcher={false}>
        <EditingBody>
          <SmallButton><IconSlot><FindIcon /></IconSlot>尋找<CaretFace><Caret /></CaretFace></SmallButton>
          <SmallButton><IconSlot><ReplaceIcon /></IconSlot>取代</SmallButton>
          <SmallButton><IconSlot><SelectIcon /></IconSlot>選取<Caret /></SmallButton>
        </EditingBody>
      </RibbonGroup>
      <CollapseArea>
        <Launcher aria-label="摺疊功能區"><Svg w={9} h={6}><P c="#666" s={1.8} d="M.7 5L4.500 1.300 8.300 5" /></Svg></Launcher>
      </CollapseArea>
    </Ribbon>
  );
}

function Navigation() {
  return (
    <NavPane>
      <NavHeader>
        <h2>導覽</h2>
        <button aria-label="工作窗格選項"><Svg w={9} h={5}><path d="M0 0h9L4.500 5z" fill="#666" /></Svg></button>
        <button aria-label="關閉"><Svg w={10} h={10}><P c="#666" s={2} d="M.8 .8l8.400 8.400M9.200 .8L.8 9.200" /></Svg></button>
      </NavHeader>
      <SearchBox><input placeholder="搜尋文件" aria-label="搜尋文件" /><FindIcon c={blue} /><Caret /></SearchBox>
      <NavTabs>
        <NavTab $first>標題</NavTab><NavTab>頁面</NavTab><NavTab>結果</NavTab>
      </NavTabs>
      <JumpTop aria-label="跳至開頭"><Svg w={8} h={7}><path fill="#333" d="M0 0h8v1H0zM4 2l4 4.500H0z" /></Svg></JumpTop>
      <ul>
        {OUTLINE.map(([level, text, open, on]) => (
          <NavItem key={text} $level={level} $on={on}>
            <Twisty>{open && <Svg w={7} h={7}><path d="M7 0v7H0z" fill="#444" /></Svg>}</Twisty>
            <a href="#heading">{text}</a>
          </NavItem>
        ))}
      </ul>
    </NavPane>
  );
}

function Document() {
  return (
    <Workspace>
      <Page>
        <TableFrame>
          <DataTable>
            <colgroup>
              <col width="268" /><col width="286" /><col width="172" /><col width="172" />
            </colgroup>
            <thead>
              <tr><HeadCell as="th" /><HeadCell as="th" /><HeadCell as="th" $dark colSpan={2}>Display in layout?</HeadCell></tr>
            </thead>
            <tbody>
              {ROWS.map((r, i) =>
                r.section ? (
                  <tr key={i}><SectionCell colSpan={4}>{r.section}</SectionCell></tr>
                ) : (
                  <tr key={i}>
                    <Cell>{r.zh}</Cell>
                    <Cell>{r.en}</Cell>
                    <CheckCell>{r.a ? "✓" : ""}</CheckCell>
                    <CheckCell>{r.b ? "✓" : ""}</CheckCell>
                  </tr>
                )
              )}
            </tbody>
          </DataTable>
          <ResizeHandle />
        </TableFrame>
        <Notes>
          <p>*股價將因應送股及拆細作出調整。公司透過介紹上市，首日開市價將當作為上市價</p>
          <p>
            * Listing price is not adjusted for dividend, bonus issue, ex-rights or any corporate actions. If the company is listed by introduction,
            <br />
            opening price on the listing date will be used as the Issue price.
          </p>
        </Notes>
        <NextItem start={4}><li>Maximum 10 records per page, there will be paging if more than 1</li></NextItem>
      </Page>
    </Workspace>
  );
}

export default function App() {
  return (
    <Window>
      <GlobalStyle />
      <TitleBar>
        <QuickAccess>
          <QuickButton aria-label="儲存" $after={12}><SaveIcon /></QuickButton>
          <QuickButton aria-label="復原" $dim $after={3}><UndoIcon /><Caret color="#fff" /></QuickButton>
          <QuickButton aria-label="重做" $dim $after={13}><RedoIcon /></QuickButton>
          <QuickButton aria-label="自訂快速存取工具列"><CustomizeIcon /></QuickButton>
        </QuickAccess>
        <DocTitle>Lamtex v.3.0.docx - Word</DocTitle>
        <WindowControls>
          <ControlButton aria-label="功能區顯示選項"><Svg w={14} h={11}><P c="#fff" d="M.5 .5h13v10H.5zM.5 2.500h13M7 9V5M4.500 6.500L7 4.500l2.500 2" /></Svg></ControlButton>
          <ControlButton aria-label="最小化"><Svg w={9} h={6}><path fill="#fff" d="M0 3h9v2H0z" /></Svg></ControlButton>
          <ControlButton aria-label="還原"><Svg w={11} h={10}><P c="#fff" d="M.5 3.500h7v6h-7zM.5 4.500h7M2.500 3V.5h8v6H8M2.500 1.500h8" /></Svg></ControlButton>
          <ControlButton aria-label="關閉視窗"><Svg w={10} h={10}><P c="#fff" s={2} d="M.8 .8l8.400 8.400M9.200 .8L.8 9.200" /></Svg></ControlButton>
        </WindowControls>
      </TitleBar>
      <TabBar>
        <Tab $file>檔案</Tab>
        {TABS.map((t, i) => <Tab key={t} $active={i === 0}>{t}</Tab>)}
        <TellMe><BulbIcon /><input placeholder="告訴我您想要執行的動作..." aria-label="告訴我您想要執行的動作" /></TellMe>
        <Tab $signIn>登入</Tab>
        <ShareButton><ShareIcon />共用</ShareButton>
      </TabBar>
      <RibbonBar />
      <Body>
        <Navigation />
        <Document />
      </Body>
      <StatusBar>
        <StatusText>第 19 頁，共 23 頁</StatusText>
        <StatusText>3492 個字</StatusText>
        <Svg w={14} h={14}><P c="#777" d="M7.500 2.500C5.500 1 3 1 .5 1.500v11c2.500-.5 5-.5 7 1zM7.500 2.500V13M9.500 1.500h4M9.500 12.500h4M10 4l4 4M14 4l-4 4" /></Svg>
        <StatusText>英文 (美國)</StatusText>
        <StatusSpacer />
        <ViewButtons>
          <ViewButton aria-label="閱讀模式"><Svg w={14} h={13}><P c="#666" d="M7 2C5 .5 3 .5 .5 .5v11c2.500 0 4.500 0 6.500 1.500 2-1.500 4-1.500 6.500-1.500V.5C11 .5 9 .5 7 2zM7 2v11M2 3.500h3M2 5.500h3M2 7.500h3M2 9.500h3M9 3.500h3M9 5.500h3M9 7.500h3M9 9.500h3" /></Svg></ViewButton>
          <ViewButton $on aria-label="整頁模式"><Svg w={14} h={13}><P c="#555" d="M.5 .5h13v12H.5zM2 3.500h10M2 5.500h10M2 7.500h10M2 9.500h10" /></Svg></ViewButton>
          <ViewButton aria-label="Web 版面配置"><Svg w={15} h={13}><P c="#666" d="M6 11.500H.5V.5h11V5M2 3.500h8M2 5.500h6M2 7.500h4M2 9.500h4" /><circle cx="10.500" cy="9" r="4" fill="#777" /><path fill="#ddd" d="M9 6l3 1-1 3-2-1z" /></Svg></ViewButton>
        </ViewButtons>
        <ZoomControls>
          <button aria-label="縮小"><Svg w={8} h={8}><path fill="#555" d="M1 3h6v2H1z" /></Svg></button>
          <ZoomSlider type="range" min="0" max="100" defaultValue="54" aria-label="縮放" />
          <button aria-label="放大"><Svg w={8} h={8}><path fill="#555" d="M3 0h2v3h3v2H5v3H3V5H0V3h3z" /></Svg></button>
        </ZoomControls>
        <ZoomValue>130%</ZoomValue>
      </StatusBar>
      <Taskbar>
        <TaskSystem>
          <SystemButton aria-label="開始"><WindowsLogo /></SystemButton>
          <SystemButton aria-label="搜尋"><TaskSearch /></SystemButton>
          <SystemButton aria-label="工作檢視"><TaskView /></SystemButton>
        </TaskSystem>
        {APPS.map(([name, Icon, run, badge]) => (
          <TaskApp key={name} aria-label={name} $run={run} $active={name === "Word"}>
            <Icon />
            {badge && <Badge $left={30}>{badge}</Badge>}
          </TaskApp>
        ))}
        <Tray>
          <TrayButton $width={46} aria-label="連絡人"><Svg w={15} h={15}><circle cx="10.500" cy="3" r="2.500" stroke="#fff" /><circle cx="4.500" cy="7.500" r="2.500" stroke="#fff" /><P c="#fff" d="M.7 15c0-3 1.500-5 4-5s3.800 2 3.800 5M8 6.500c3-1.500 6 .5 6 4" /></Svg></TrayButton>
          <TrayButton $width={25} aria-label="顯示隱藏的圖示"><Svg w={13} h={7}><P c="#fff" s={1.3} d="M.7 6.500L6.500 .8l5.800 5.700" /></Svg></TrayButton>
          <TrayButton $width={23} aria-label="網路"><Svg w={16} h={14}><P c="#fff" d="M4.500 2.500h11v7.500h-11zM10 10v3M6.500 13.500h7M.5 .5h4v4h-4zM2.500 4.500V11h2" /></Svg></TrayButton>
          <TrayButton $width={24} aria-label="音量"><Svg w={15} h={12}><P c="#fff" d="M.5 4v4h2.500l3.500 3.500V.5L3 4zM9 3.500l5 5M14 3.500l-5 5" /></Svg></TrayButton>
          <TrayButton $width={24}>英</TrayButton>
          <TrayButton $width={33}><ImeBox>速</ImeBox></TrayButton>
          <Clock><span>3:43 PM</span><span>3/27/2019</span></Clock>
          <TrayButton $width={44} $end={14} aria-label="通知">
            <Svg w={16} h={16}><path fill="#fff" d="M0 0h16v12H8l-3 3.500V12H0z" /><P c="#15141d" d="M3 3.500h10M3 6h10M3 8.500h7" /></Svg>
            <Badge $left={15}>2</Badge>
          </TrayButton>
          <ShowDesktop aria-label="顯示桌面" />
        </Tray>
      </Taskbar>
    </Window>
  );
}
